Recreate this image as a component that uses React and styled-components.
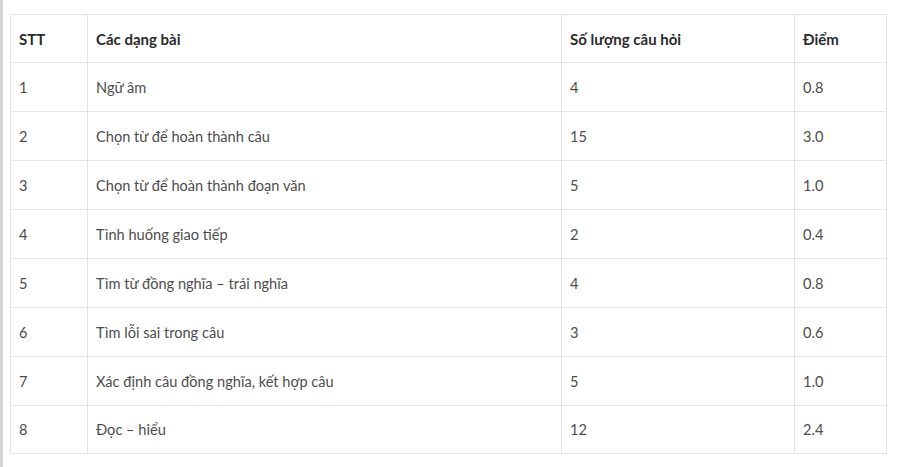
import React from "react";
import styled, { createGlobalStyle } from "styled-components";

const GlobalStyle = createGlobalStyle`
  html, body {
    margin: 0;
    padding: 0;
    background: #fff;
  }
  body {
    font-family: Lato, "Noto Sans", sans-serif;
  }
`;

const rows = [
  { stt: 1, type: "Ngữ âm", count: 4, score: "0.8" },
  { stt: 2, type: "Chọn từ để hoàn thành câu", count: 15, score: "3.0" },
  { stt: 3, type: "Chọn từ để hoàn thành đoạn văn", count: 5, score: "1.0" },
  { stt: 4, type: "Tình huống giao tiếp", count: 2, score: "0.4" },
  { stt: 5, type: "Tìm từ đồng nghĩa – trái nghĩa", count: 4, score: "0.8" },
  { stt: 6, type: "Tìm lỗi sai trong câu", count: 3, score: "0.6" },
  { stt: 7, type: "Xác định câu đồng nghĩa, kết hợp câu", count: 5, score: "1.0" },
  { stt: 8, type: "Đọc – hiểu", count: 12, score: "2.4" },
];

const App = () => {
  return (
    <>
      <GlobalStyle />
      <StyledPage>
        <StyledTable>
          <colgroup>
            <col style={{ width: 77 }} />
            <col style={{ width: 474 }} />
            <col style={{ width: 233 }} />
            <col style={{ width: 92 }} />
          </colgroup>
          <thead>
            <HeadRow>
              <HeadCell>STT</HeadCell>
              <HeadCell>Các dạng bài</HeadCell>
              <HeadCell>Số lượng câu hỏi</HeadCell>
              <HeadCell>Điểm</HeadCell>
            </HeadRow>
          </thead>
          <tbody>
            {rows.map((row) => {
              return (
                <BodyRow key={row.stt}>
                  <Cell>{row.stt}</Cell>
                  <Cell>{row.type}</Cell>
                  <Cell>{row.count}</Cell>
                  <Cell>{row.score}</Cell>
                </BodyRow>
              );
            })}
          </tbody>
        </StyledTable>
      </StyledPage>
    </>
  );
};

const StyledPage = styled.div`
  min-height: 467px;
  box-sizing: border-box;
  border-left: 3px solid #d4d4d4;
  padding: 14px 0 0 7px;
`;

const StyledTable = styled.table`
  width: 876px;
  table-layout: fixed;
  border-collapse: collapse;
  border: 1px solid #e4e4e4;
`;

const HeadRow = styled.tr`
  height: 48px;
`;

const BodyRow = styled.tr`
  height: 49px;

  &:last-child {
    height: 48px;
  }
`;

const HeadCell = styled.th`
  padding: 0 8px;
  border: 1px solid #e4e4e4;
  text-align: left;
  font-size: 15px;
  font-weight: 700;
  color: #2b2b2b;
`;

const Cell = styled.td`
  padding: 0 8px;
  border: 1px solid #e4e4e4;
  font-size: 14.6px;
  color: #4d4d4d;
`;

export default App;
